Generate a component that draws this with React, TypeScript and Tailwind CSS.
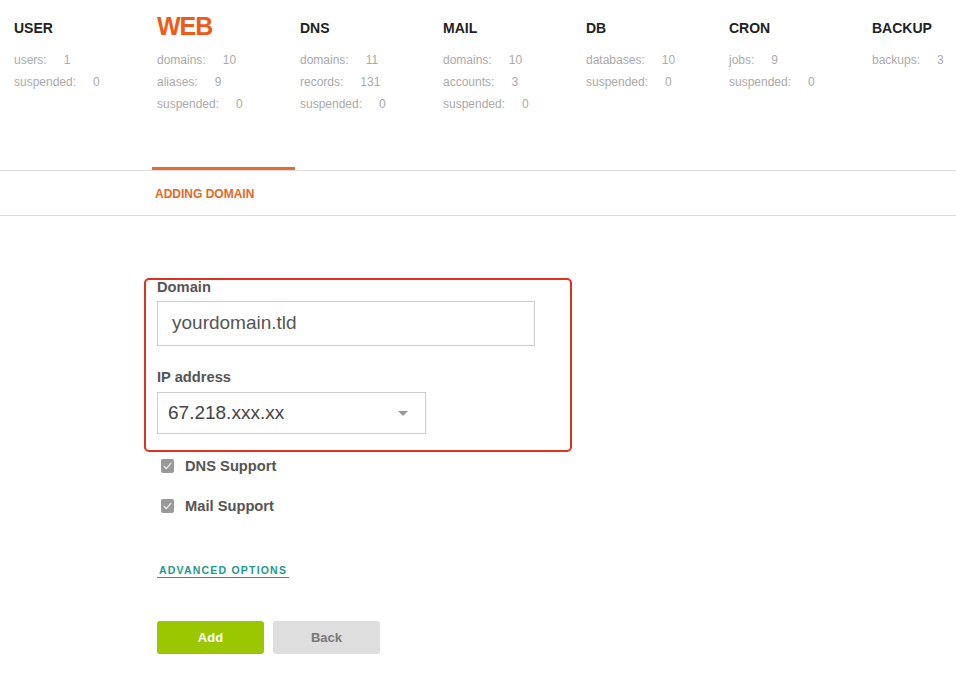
const stats = [
  { title: "USER", rows: [["users:", "1"], ["suspended:", "0"]] },
  { title: "WEB", active: true, rows: [["domains:", "10"], ["aliases:", "9"], ["suspended:", "0"]] },
  { title: "DNS", rows: [["domains:", "11"], ["records:", "131"], ["suspended:", "0"]] },
  { title: "MAIL", rows: [["domains:", "10"], ["accounts:", "3"], ["suspended:", "0"]] },
  { title: "DB", rows: [["databases:", "10"], ["suspended:", "0"]] },
  { title: "CRON", rows: [["jobs:", "9"], ["suspended:", "0"]] },
  { title: "BACKUP", rows: [["backups:", "3"]] },
];

function Check({ label }: { label: string }) {
  return (
    <label className="flex h-[20px] items-center">
      <span className="ml-[4px] flex h-[14px] w-[13px] items-center justify-center rounded-[2px] bg-[#999]">
        <svg width="9" height="8" viewBox="0 0 9 8" fill="none">
          <path d="M1 4.2 L3.4 6.6 L8 1.2" stroke="#ececec" strokeWidth="1.3" strokeLinecap="round" strokeLinejoin="round" />
        </svg>
      </span>
      <span className="ml-[11px] text-[14.7px] font-bold text-[#555]">{label}</span>
    </label>
  );
}

export default function App() {
  return (
    <div className="min-h-[687px] w-[956px] overflow-hidden bg-white font-['Liberation_Sans',Arial,sans-serif]">
      {/* stats header */}
      <div className="flex h-[167px] pl-[14px]">
        {stats.map((s) => (
          <div key={s.title} className="w-[143px] shrink-0">
            <div className="h-[49px]">
              {s.active ? (
                <div className="pt-[13px] text-[25px] font-bold leading-[26px] tracking-[-1px] text-[#ee5b17]">{s.title}</div>
              ) : (
                <div className="pt-[21px] text-[14px] font-bold leading-[14px] text-[#222]">{s.title}</div>
              )}
            </div>
            {s.rows.map(([k, v]) => (
              <div key={k} className="flex text-[12px] leading-[22px] text-[#aaa]">
                <span className="mr-[17px]">{k}</span>
                <span>{v}</span>
              </div>
            ))}
          </div>
        ))}
      </div>
      <div className="border-b border-[#dcdcdc]">
        <div className="ml-[152px] h-[3px] w-[143px] bg-[#ea6a2c]" />
      </div>
      <div className="flex h-[45px] items-center border-b border-[#dcdcdc] pl-[155px] pt-[1px]">
        <span className="text-[12px] font-bold text-[#e4691f]">ADDING DOMAIN</span>
      </div>

      {/* form */}
      <div className="ml-[144px] mt-[62px] h-[174px] w-[428px] rounded-[5px] border-2 border-[#e0301e] pl-[11px]">
        <div className="-mt-[2px] text-[14.7px] font-bold leading-[18px] text-[#555]">Domain</div>
        <div className="mt-[5px] flex h-[45px] w-[378px] items-center border border-[#ccc] pl-[14px] text-[19px] text-[#555]">
          yourdomain.tld
        </div>
        <div className="mt-[22px] text-[14.7px] font-bold leading-[18px] text-[#555]">IP address</div>
        <div className="mt-[6px] flex h-[42px] w-[269px] items-center justify-between border border-[#ccc] pl-[10px] pr-[17px] text-[19px] text-[#444]">
          <span>67.218.xxx.xx</span>
          <svg width="10" height="5" viewBox="0 0 10 5">
            <path d="M0 0 L10 0 L5 5 Z" fill="#999" />
          </svg>
        </div>
      </div>

      <div className="ml-[157px]">
        <div className="mt-[4px] flex flex-col gap-[20px]">
          <Check label="DNS Support" />
          <Check label="Mail Support" />
        </div>
        <div className="mt-[41px]">
          <a href="#" className="inline-block border-b-[1.5px] border-[#23998a] pb-[1px] pl-[2px] pr-[2px] text-[10.5px] font-bold leading-[12px] tracking-[1.2px] text-[#23998a]">
            ADVANCED OPTIONS
          </a>
        </div>
        <div className="mt-[40px] flex gap-[9px]">
          <button className="h-[33px] w-[107px] rounded-[3px] bg-[#9ac700] text-[13px] font-bold text-white">Add</button>
          <button className="h-[33px] w-[107px] rounded-[3px] bg-[#dedede] text-[13px] font-bold text-[#777]">Back</button>
        </div>
      </div>
    </div>
  );
}
